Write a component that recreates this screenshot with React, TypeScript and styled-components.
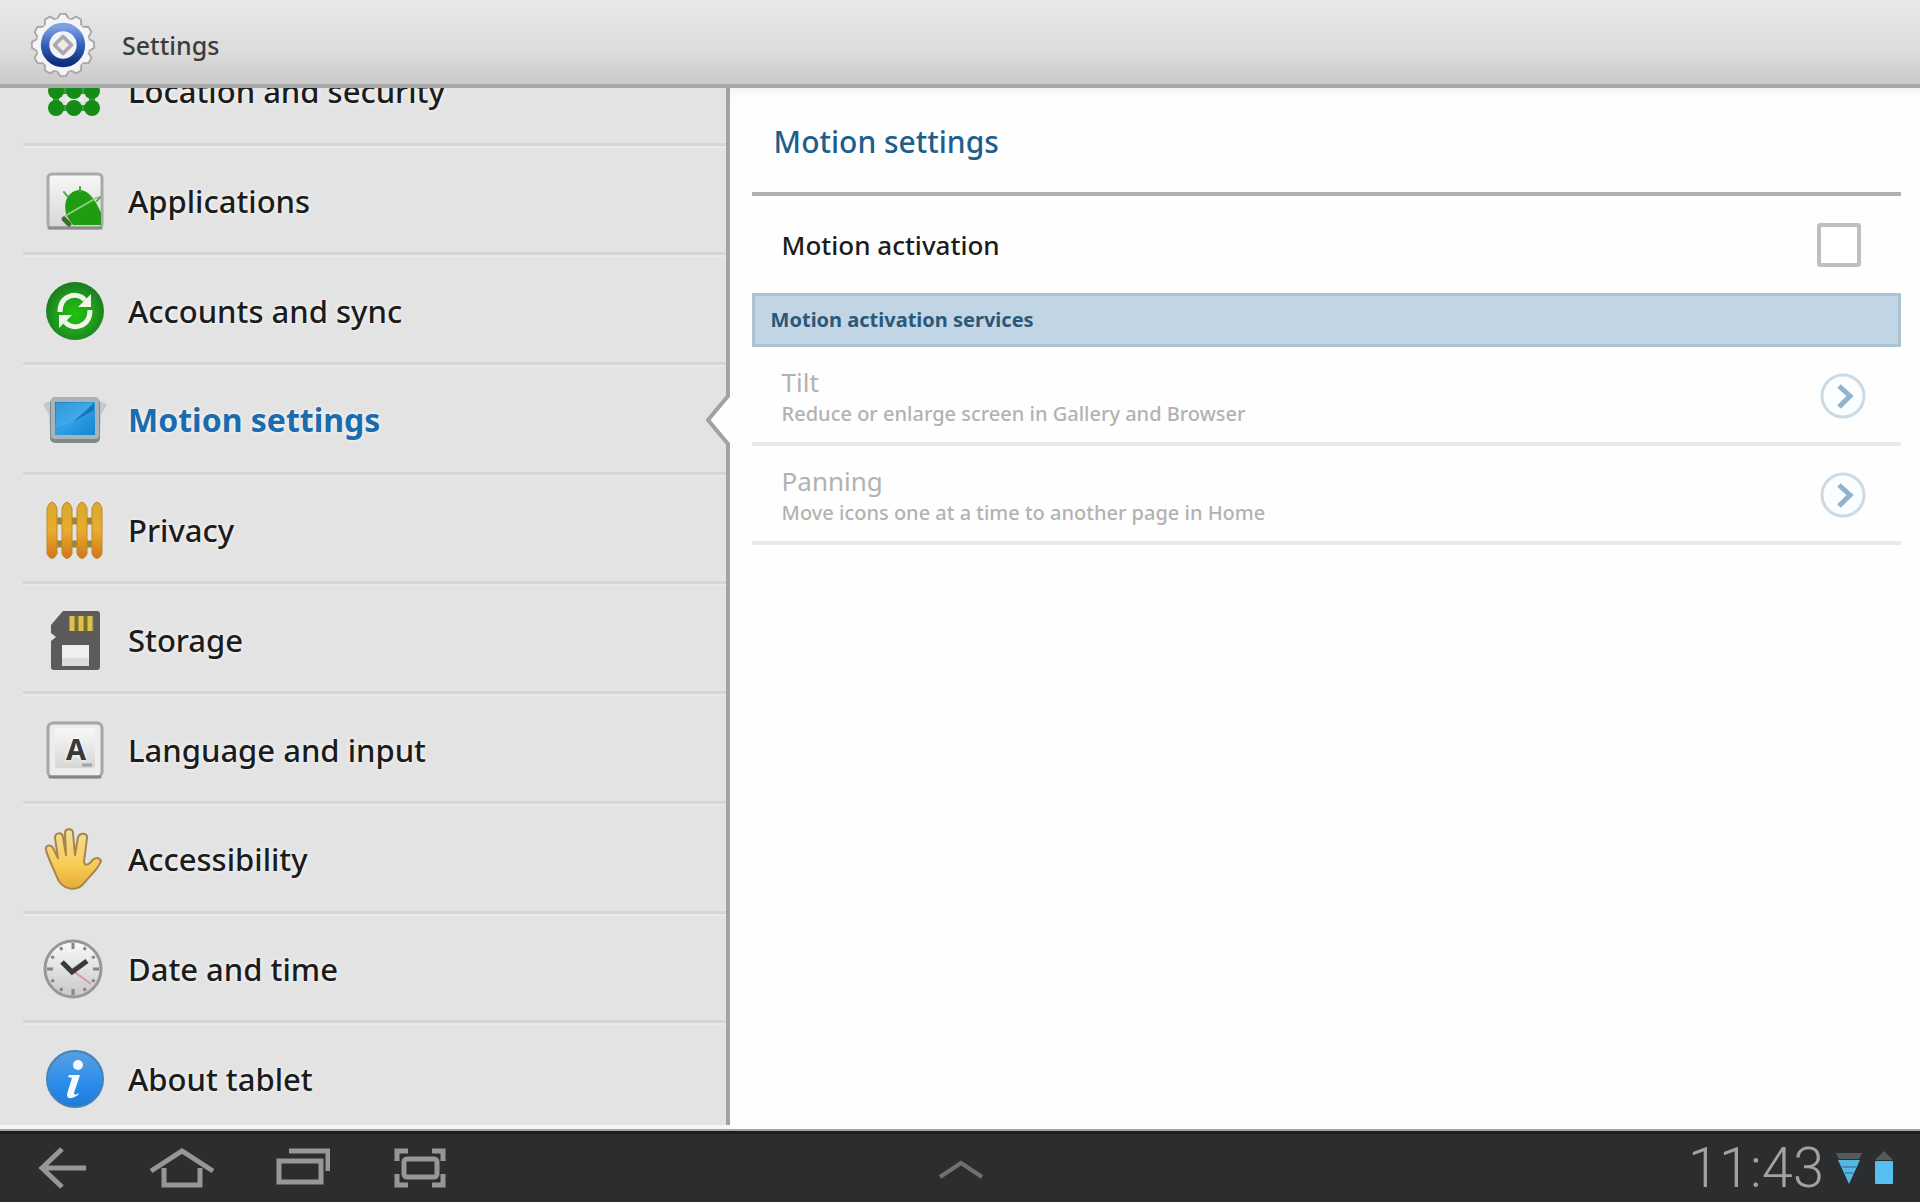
import React, { useState } from "react";
import styled, { createGlobalStyle } from "styled-components";

const GlobalStyle = createGlobalStyle`
  *, *::before, *::after { box-sizing: border-box; }
  body {
    margin: 0;
    font-family: "Noto Sans", "Open Sans", sans-serif;
    color: #1c1c1c;
    background: #fefefe;
  }
  button { font: inherit; color: inherit; background: none; border: 0; padding: 0; margin: 0; text-align: left; }
  h1, h2, h3, p, ul { margin: 0; padding: 0; }
  ul { list-style: none; }
  svg { display: block; flex: none; }
`;

const Screen = styled.div`
  display: grid;
  grid-template-rows: 88px minmax(0, 1fr) 71px;
  height: 100vh;
`;

const TitleBar = styled.header`
  display: flex;
  align-items: center;
  gap: 26px;
  padding: 6px 30px 0;
  background: linear-gradient(#e9e9e9, #dcdcdc 60%, #cbcbcb);
  border-bottom: 4px solid #a8a8a8;
`;

const AppName = styled.h1`
  font-size: 25px;
  line-height: 32px;
  font-weight: 500;
  color: #3c3c3c;
`;

const Body = styled.div`
  display: grid;
  grid-template-columns: 38% minmax(0, 1fr);
  min-height: 0;
`;

const Sidebar = styled.nav`
  overflow: hidden;
  background: #e3e3e3;
  border-bottom: 6px solid #f6f6f6;
`;

const Menu = styled.ul`
  display: grid;
  grid-auto-rows: 1fr;
  height: 1097px;
  margin-top: -52px;
  border-right: 4px solid #a2a2a2;
`;

const MenuItem = styled.li`
  position: relative;
  display: grid;
  margin-left: 23px;
  border-bottom: 3px solid #d6d6d6;
  box-shadow: 0 2px 0 #e9e9e9;
`;

const MenuButton = styled.button<{ $active: boolean }>`
  display: flex;
  align-items: center;
  gap: 21px;
  padding: 4px 0 0 20px;
  font-size: ${(p) => (p.$active ? 32 : 31)}px;
  line-height: 40px;
  font-weight: ${(p) => (p.$active ? 700 : 500)};
  color: ${(p) => (p.$active ? "#1a6cae" : "#1c1c1c")};
  text-shadow: 0 0 4px #ffffff;
`;

const Notch = styled.svg`
  position: absolute;
  right: -4px;
  top: 28px;
`;

const Detail = styled.main`
  min-width: 0;
  padding: 0 19px 0 22px;
  background: linear-gradient(#f4f4f4, #fefefe 10px);
`;

const DetailTitle = styled.h2`
  padding: 34px 22px 30px;
  border-bottom: 4px solid #b0b0b0;
  font-size: 30px;
  line-height: 40px;
  font-weight: 500;
  color: #1d5f8c;
`;

const ToggleRow = styled.label`
  display: flex;
  align-items: center;
  justify-content: space-between;
  height: 97px;
  padding: 0 40px 0 30px;
  font-size: 26px;
  line-height: 32px;
  font-weight: 500;
`;

const CheckBox = styled.input`
  appearance: none;
  width: 44px;
  height: 44px;
  margin: 0;
  background: #ffffff;
  border: 4px solid #bcc0c4;
  border-radius: 3px;
  &:checked { background: #4d9fd0; }
`;

const SectionHeader = styled.h3`
  padding: 8px 16px;
  border: 3px solid #adc3d2;
  background: #c1d5e4;
  font-size: 20px;
  line-height: 32px;
  font-weight: 700;
  color: #2b5878;
`;

const ServiceButton = styled.button`
  display: flex;
  align-items: center;
  justify-content: space-between;
  width: 100%;
  height: 99px;
  padding: 3px 34px 0 30px;
  border-bottom: 4px solid #e9e9e9;
  color: #b2b2b2;
`;

const ServiceText = styled.span`
  padding-top: 4px;
`;

const ServiceName = styled.span`
  display: block;
  font-size: 26px;
  line-height: 32px;
`;

const ServiceNote = styled.span`
  display: block;
  font-size: 20px;
  line-height: 32px;
  font-weight: 500;
`;

const SystemBar = styled.footer`
  display: grid;
  grid-template-columns: 1fr auto 1fr;
  align-items: center;
  padding: 0 26px 0 28px;
  background: #2b2d2f;
  border-top: 3px solid #1c1e1f;
  box-shadow: 0 -2px 0 #a4a4a4;
`;

const SystemKeys = styled.div`
  display: flex;
  gap: 50px;
`;

const Status = styled.div`
  display: flex;
  align-items: center;
  justify-content: flex-end;
  gap: 12px;
`;

const Clock = styled.time`
  font-family: Roboto, sans-serif;
  font-size: 56px;
  line-height: 60px;
  font-weight: 300;
  color: #a2a2a2;
`;

const GearIcon = () => {
  const teeth = Array.from({ length: 12 }, (_, i) => i * 30);
  return (
    <svg width="66" height="66" viewBox="0 0 70 70" aria-hidden="true">
      <defs>
        <linearGradient id="ring" x1="0" y1="0" x2="0" y2="1">
          <stop offset="0" stopColor="#7fa0e2" />
          <stop offset="0.5" stopColor="#3560b8" />
          <stop offset="1" stopColor="#0f2f7c" />
        </linearGradient>
      </defs>
      <g fill="#f4f4f6" stroke="#a9a6a6" strokeWidth="2" strokeLinejoin="round">
        {teeth.map((a) => (
          <path key={a} d="M27 10 L32 2 H38 L43 10 Z" transform={`rotate(${a} 35 35)`} />
        ))}
      </g>
      <circle cx="35" cy="35" r="28" fill="#f2f4f8" />
      <circle cx="35" cy="35" r="19" fill="#f4f4f6" stroke="url(#ring)" strokeWidth="9" />
      <path d="M35 26 L44 35 L35 44 L26 35 Z" fill="#f1e9e4" stroke="#a8a8b4" strokeWidth="4" strokeLinejoin="round" />
    </svg>
  );
};

const Icon = ({ children }: { children: React.ReactNode }) => (
  <svg width="64" height="64" viewBox="0 0 64 64" aria-hidden="true">
    {children}
  </svg>
);

const LocationIcon = () => (
  <Icon>
    <g stroke="#3c9c38" strokeWidth="6" fill="none">
      <path d="M13 15 H49 V49 H13 Z M31 15 V49 M13 32 H49" />
    </g>
    <path d="M22 40 H40" stroke="#e9efe8" strokeWidth="5" />
    <g fill="#158c17">
      {[13, 31, 49].map((x) => [15, 32, 49].map((y) => <circle key={`${x}-${y}`} cx={x} cy={y} r="8" />))}
    </g>
  </Icon>
);

const TileDefs = () => (
  <defs>
    <linearGradient id="tile" x1="0" y1="0" x2="0" y2="1">
      <stop offset="0" stopColor="#f8f8f8" />
      <stop offset="1" stopColor="#d6d6d6" />
    </linearGradient>
  </defs>
);

const ApplicationsIcon = () => (
  <Icon>
    <TileDefs />
    <rect x="5" y="5" width="54" height="54" rx="4" fill="url(#tile)" stroke="#aaaaaa" strokeWidth="3" />
    <path d="M6 59 H58" stroke="#8c8c8c" strokeWidth="3" strokeLinecap="round" />
    <path d="M23 44 C20 30 27 22 36 21 C45 21 52 29 58 44 V56 H30 L23 46 Z" fill="#1f9d12" />
    <path d="M22 47 L55 28" stroke="#8ed07f" strokeWidth="2" />
    <path d="M25 28 L21 23 M37 22 L37 18 M54 32 L57 28" stroke="#3faa33" strokeWidth="2" strokeLinecap="round" />
    <path d="M21 50 L26 55" stroke="#3f6d2b" strokeWidth="5" strokeLinecap="round" />
  </Icon>
);

const SyncIcon = () => (
  <Icon>
    <defs>
      <radialGradient id="green" cx="0.5" cy="0.55" r="0.55">
        <stop offset="0" stopColor="#1ec40c" />
        <stop offset="0.6" stopColor="#1f9d1c" />
        <stop offset="1" stopColor="#1a7a20" />
      </radialGradient>
    </defs>
    <circle cx="32" cy="32" r="29" fill="url(#green)" />
    <g fill="none" stroke="#f1f7e8" strokeWidth="5">
      <path d="M17 33 C17 16 34 12 42 21" />
      <path d="M47 31 C47 48 30 52 22 43" />
    </g>
    <path d="M48 15 V28 H35 Z M16 49 V36 H29 Z" fill="#f1f7e8" />
  </Icon>
);

const MotionIcon = () => (
  <Icon>
    <defs>
      <linearGradient id="screen" x1="0" y1="0" x2="1" y2="1">
        <stop offset="0" stopColor="#1b7cc4" />
        <stop offset="0.5" stopColor="#2f9fe6" />
        <stop offset="1" stopColor="#1683d0" />
      </linearGradient>
    </defs>
    <path d="M0 16 L12 11 V46 L7 44 L6 27 Z M64 16 L52 11 V46 L57 44 L58 27 Z" fill="#c3c8ca" />
    <rect x="7" y="10" width="50" height="45" rx="5" fill="#7f8a8c" />
    <rect x="8" y="9" width="48" height="42" rx="4" fill="#a9b4b8" />
    <rect x="12" y="14" width="40" height="33" fill="url(#screen)" />
    <path d="M13 15 H50 C42 28 30 36 13 40 Z" fill="#4db2ee" opacity="0.5" />
    <path d="M30 34 L51 15 V22 Z" fill="#14599a" opacity="0.6" />
  </Icon>
);

const PrivacyIcon = () => (
  <Icon>
    <defs>
      <linearGradient id="plank" x1="0" y1="0" x2="0" y2="1">
        <stop offset="0" stopColor="#d8a930" />
        <stop offset="0.5" stopColor="#e9ad2c" />
        <stop offset="1" stopColor="#d2761a" />
      </linearGradient>
    </defs>
    <path d="M6 23 H58 M6 46 H58" stroke="#9c8436" strokeWidth="7" />
    {[4, 19, 34, 49].map((x) => (
      <path key={x} d={`M${x} 10 Q${x + 5} -2 ${x + 10} 10 V56 Q${x + 5} 65 ${x} 56 Z`} fill="url(#plank)" stroke="#b98a2a" strokeWidth="1" />
    ))}
  </Icon>
);

const StorageIcon = () => (
  <Icon>
    <path d="M20 3 H54 Q57 3 57 6 V59 Q57 62 54 62 H11 Q8 62 8 59 V33 L13 29 L8 25 V17 Z" fill="#5b5b5b" />
    <path d="M26 8 H51 V23 H26 Z" fill="#7a6d33" />
    <path d="M29 8 V23 M38 8 V23 M47 8 V23" stroke="#ddc04e" strokeWidth="5" />
    <rect x="19" y="37" width="27" height="21" fill="#efefef" />
    <path d="M19 50 H46 V58 H19 Z" fill="#dcdcdc" />
  </Icon>
);

const LanguageIcon = () => (
  <Icon>
    <TileDefs />
    <rect x="5" y="5" width="54" height="54" rx="5" fill="#ededed" stroke="#a6a6a6" strokeWidth="3" />
    <path d="M7 59 H57" stroke="#868686" strokeWidth="3" strokeLinecap="round" />
    <rect x="12" y="10" width="40" height="40" rx="3" fill="url(#tile)" />
    <text x="33" y="42" textAnchor="middle" fontFamily="Noto Sans, sans-serif" fontWeight="700" fontSize="29" fill="#3a3a3a">A</text>
    <path d="M39 47 H49" stroke="#a5a5a5" strokeWidth="3" />
  </Icon>
);

const HandIcon = () => (
  <Icon>
    <defs>
      <linearGradient id="hand" x1="0" y1="0" x2="0" y2="1">
        <stop offset="0" stopColor="#f3dc9c" />
        <stop offset="0.6" stopColor="#f8cc55" />
        <stop offset="1" stopColor="#e6ab35" />
      </linearGradient>
    </defs>
    <path
      d="M13 48 C10 40 5 31 3 23 C2 18 8 17 10 21 L15 31 L12 11 C12 5 19 5 20 10 L23 28 L22 6 C22 1 30 1 30 6 L32 28 L35 10 C37 5 45 6 44 11 L41 35 C42 39 45 38 48 35 C51 30 56 30 58 34 C56 41 47 49 42 55 C35 65 19 65 13 48 Z"
      fill="url(#hand)"
      stroke="#a58549"
      strokeWidth="2"
      strokeLinejoin="round"
    />
  </Icon>
);

const ClockIcon = () => (
  <Icon>
    <defs>
      <linearGradient id="dial" x1="0" y1="0" x2="0" y2="1">
        <stop offset="0" stopColor="#fafafa" />
        <stop offset="1" stopColor="#c9c7c7" />
      </linearGradient>
    </defs>
    <circle cx="30" cy="32" r="28" fill="url(#dial)" stroke="#989696" strokeWidth="3" />
    <g stroke="#858585" strokeWidth="3">
      {Array.from({ length: 12 }, (_, i) => (
        <path key={i} d={i % 3 === 0 ? "M30 6 V12" : "M30 7 V10"} transform={`rotate(${i * 30} 30 32)`} />
      ))}
    </g>
    <path d="M30 34 L48 47" stroke="#d29a9a" strokeWidth="2" />
    <path d="M19 25 L29 35 L44 24" fill="none" stroke="#3a3a3a" strokeWidth="5" />
  </Icon>
);

const InfoIcon = () => (
  <Icon>
    <defs>
      <linearGradient id="info" x1="0" y1="0" x2="0" y2="1">
        <stop offset="0" stopColor="#5a9fe0" />
        <stop offset="0.6" stopColor="#2a8cec" />
        <stop offset="1" stopColor="#1f7ad6" />
      </linearGradient>
    </defs>
    <circle cx="32" cy="32" r="28" fill="url(#info)" stroke="#4583b8" strokeWidth="2" />
    <circle cx="35" cy="18" r="5" fill="#f4fbff" />
    <path d="M26 28 H37 L31 46 Q31 49 36 46 L35 48 Q24 55 24 47 L29 31 L25 30 Z" fill="#f4fbff" />
  </Icon>
);

const ArrowBadge = () => (
  <svg width="48" height="48" viewBox="0 0 48 48" aria-hidden="true">
    <circle cx="24" cy="24" r="21" fill="#fbfeff" stroke="#cbdbe5" strokeWidth="3" />
    <path d="M20 14 L31 24 L20 35" fill="none" stroke="#8fb3cf" strokeWidth="5" />
  </svg>
);

const KeyIcon = ({ children, width }: { children: React.ReactNode; width: number }) => (
  <svg width={width} height="44" viewBox={`0 0 ${width} 44`} fill="none" stroke="#979797" strokeWidth="5" aria-hidden="true">
    {children}
  </svg>
);

const menu = [
  { label: "Location and security", icon: <LocationIcon /> },
  { label: "Applications", icon: <ApplicationsIcon /> },
  { label: "Accounts and sync", icon: <SyncIcon /> },
  { label: "Motion settings", icon: <MotionIcon /> },
  { label: "Privacy", icon: <PrivacyIcon /> },
  { label: "Storage", icon: <StorageIcon /> },
  { label: "Language and input", icon: <LanguageIcon /> },
  { label: "Accessibility", icon: <HandIcon /> },
  { label: "Date and time", icon: <ClockIcon /> },
  { label: "About tablet", icon: <InfoIcon /> },
];

const services = [
  { name: "Tilt", note: "Reduce or enlarge screen in Gallery and Browser" },
  { name: "Panning", note: "Move icons one at a time to another page in Home" },
];

export default function App() {
  const [active, setActive] = useState("Motion settings");
  const [motion, setMotion] = useState(false);

  return (
    <>
      <GlobalStyle />
      <Screen>
        <TitleBar>
          <GearIcon />
          <AppName>Settings</AppName>
        </TitleBar>
        <Body>
          <Sidebar aria-label="Settings sections">
            <Menu>
              {menu.map(({ label, icon }) => (
                <MenuItem key={label}>
                  <MenuButton type="button" $active={label === active} onClick={() => setActive(label)}>
                    {icon}
                    {label}
                  </MenuButton>
                  {label === active && (
                    <Notch width="24" height="54" viewBox="0 0 24 54" aria-hidden="true">
                      <path d="M24 0 V54 L2 27 Z" fill="#fefefe" />
                      <path d="M22 0 V3 L2 27 L22 51 V54" fill="none" stroke="#a2a2a2" strokeWidth="4" />
                    </Notch>
                  )}
                </MenuItem>
              ))}
            </Menu>
          </Sidebar>
          <Detail>
            <DetailTitle>Motion settings</DetailTitle>
            <ToggleRow htmlFor="motion-activation">
              Motion activation
              <CheckBox
                id="motion-activation"
                type="checkbox"
                checked={motion}
                onChange={(e) => setMotion(e.target.checked)}
              />
            </ToggleRow>
            <SectionHeader>Motion activation services</SectionHeader>
            {services.map(({ name, note }) => (
              <ServiceButton key={name} type="button" disabled={!motion}>
                <ServiceText>
                  <ServiceName>{name}</ServiceName>
                  <ServiceNote>{note}</ServiceNote>
                </ServiceText>
                <ArrowBadge />
              </ServiceButton>
            ))}
          </Detail>
        </Body>
        <SystemBar>
          <SystemKeys>
            <button type="button" aria-label="Back">
              <KeyIcon width={70}>
                <path d="M34 3 L14 22 L34 41 M15 22 H58" />
              </KeyIcon>
            </button>
            <button type="button" aria-label="Home">
              <KeyIcon width={70}>
                <path d="M3 25 L34 5 L65 25 M16 22 V39 H52 V22" />
              </KeyIcon>
            </button>
            <button type="button" aria-label="Recent apps">
              <KeyIcon width={62}>
                <path d="M11 15 H53 V36 H11 Z M21 5 H62 M60 3 V25" />
              </KeyIcon>
            </button>
            <button type="button" aria-label="Screenshot">
              <KeyIcon width={70}>
                <rect x="24" y="13" width="33" height="18" rx="3" />
                <path d="M17 15 V5 H28 M52 5 H63 V15 M17 28 V39 H28 M52 39 H63 V28" />
              </KeyIcon>
            </button>
          </SystemKeys>
          <button type="button" aria-label="Open mini apps">
            <svg width="48" height="28" viewBox="0 0 48 28" aria-hidden="true">
              <path d="M3 23 L24 9 L45 23" fill="none" stroke="#6f7072" strokeWidth="4" />
            </svg>
          </button>
          <Status>
            <Clock>11:43</Clock>
            <svg width="26" height="34" viewBox="0 0 26 34" aria-label="Wi-Fi">
              <path d="M0 2 H26 L23 8 H3 Z" fill="#56595b" />
              <path d="M2 9 H24 L13 33 Z" fill="#58b6e2" />
              <path d="M6 16 H20 M9 22 H17" stroke="#3f8fb8" strokeWidth="2" />
            </svg>
            <svg width="20" height="36" viewBox="0 0 20 36" aria-label="Battery">
              <path d="M10 1 L19 10 H1 Z" fill="#56595b" />
              <rect x="1" y="11" width="18" height="23" rx="1" fill="#58bdf0" />
            </svg>
          </Status>
        </SystemBar>
      </Screen>
    </>
  );
}
